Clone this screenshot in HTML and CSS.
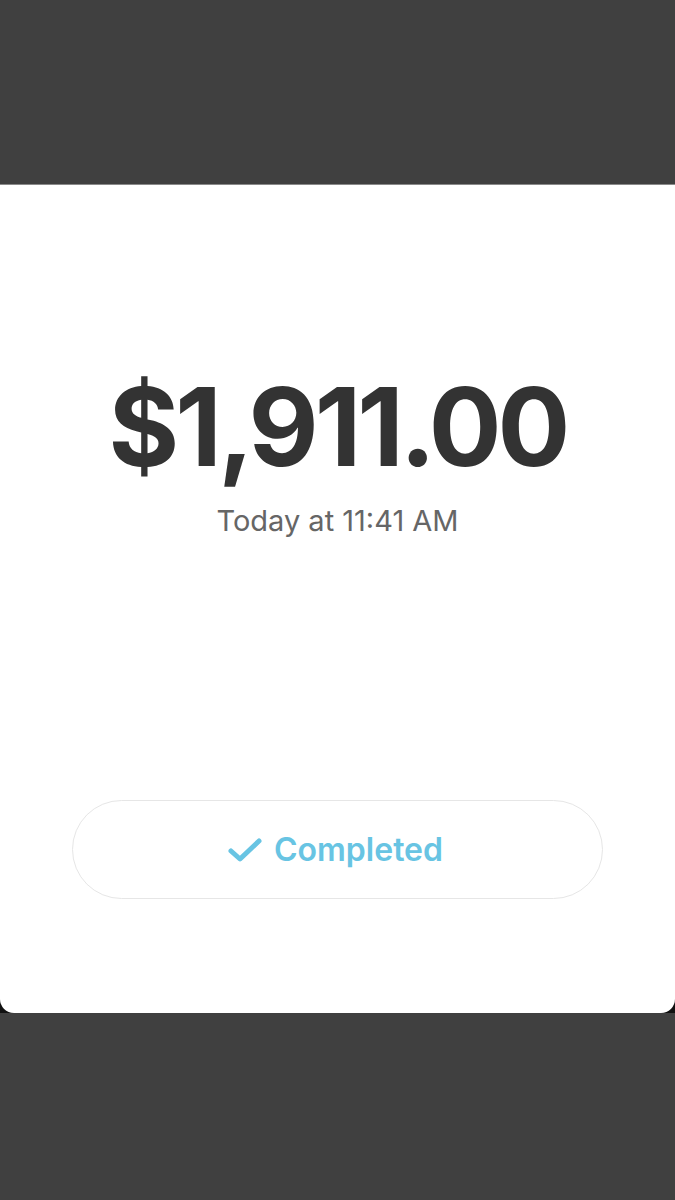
FILE: index.html
```html
<!DOCTYPE html>
<html>
	<head>
		<meta charset="utf-8">
		<link rel="stylesheet" href="styles.css">
	</head>
	<body>
		<div class="topBar"></div>
		<div class="cardBack">
			<div class="card">
				<div class="amount">$1,911.00</div>
				<div class="when">Today at 11:41 AM</div>
				<div class="status">
					<svg class="check" width="34" height="26" viewBox="0 0 34 26">
						<path d="M3 14 L12 22 L31 4" fill="none" stroke="#68c4e3" stroke-width="5" stroke-linecap="round" stroke-linejoin="round"/>
					</svg>
					<span class="statusText">Completed</span>
				</div>
			</div>
		</div>
	</body>
</html>
```

FILE: styles.css
```css
body{
	margin:0;
	background-color:#404040;
	font-family:Inter, "Liberation Sans", sans-serif;
}

.topBar{
	height:184px;
	border-bottom:1px solid #8a8a8a;
}

.cardBack{
	background-color:#111;
}

.card{
	background-color:#fff;
	height:828px;
	border-radius:0 0 14px 14px;
	display:flex;
	flex-direction:column;
	align-items:center;
	padding-top:188px;
	box-sizing:border-box;
}

.amount{
	font-size:108px;
	line-height:1;
	font-weight:700;
	color:#333;
	letter-spacing:-4px;
}

.when{
	margin-top:25px;
	font-size:29px;
	line-height:1;
	color:#666;
}

.status{
	margin-top:265px;
	width:531px;
	height:99px;
	border:1px solid #e6e6e6;
	border-radius:50px;
	box-sizing:border-box;
	display:flex;
	align-items:center;
	justify-content:center;
	gap:12px;
}

.check{
	margin-left:-4px;
}

.statusText{
	font-size:32px;
	font-weight:600;
	color:#68c4e3;
}
```
